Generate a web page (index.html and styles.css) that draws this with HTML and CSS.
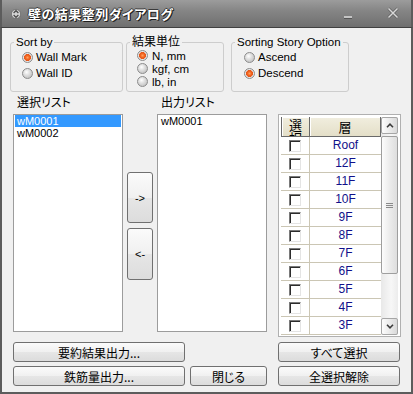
FILE: index.html
```html
<!DOCTYPE html>
<html lang="ja">
<head>
  <meta charset="UTF-8" />
  <title>壁の結果整列ダイアログ</title>
  <link rel="stylesheet" href="styles.css">
</head>
<body>
  <div class="window">
    <div class="titlebar">
      <svg class="title-icon" width="10" height="12" viewBox="0 0 10 12">
        <circle cx="5" cy="6" r="4.6" fill="#d4d4d4" stroke="#5a5a5a" stroke-width="0.6"/>
        <path d="M2.6 5 L5 2.7 L7.4 5 M2.6 7 L5 9.3 L7.4 7" fill="none" stroke="#4a4a4a" stroke-width="1.2"/>
      </svg>
      <span class="title">壁の結果整列ダイアログ</span>
      <span class="minimize"></span>
      <svg class="close" width="12" height="12" viewBox="0 0 12 12">
        <path d="M1.5 1.5 L10.5 10.5 M10.5 1.5 L1.5 10.5" stroke="#5a5a5a" stroke-width="2.8"/>
        <path d="M1.5 1.5 L10.5 10.5 M10.5 1.5 L1.5 10.5" stroke="#d8d8d8" stroke-width="1.5"/>
      </svg>
    </div>

    <div class="body">
      <div class="options">
        <fieldset class="group sort">
          <legend>Sort by</legend>
          <label class="radio"><span class="dot on"></span>Wall Mark</label>
          <label class="radio"><span class="dot"></span>Wall ID</label>
        </fieldset>
        <fieldset class="group unit">
          <legend class="jp">結果単位</legend>
          <label class="radio"><span class="dot on"></span>N, mm</label>
          <label class="radio"><span class="dot"></span>kgf, cm</label>
          <label class="radio"><span class="dot"></span>lb, in</label>
        </fieldset>
        <fieldset class="group story">
          <legend>Sorting Story Option</legend>
          <label class="radio"><span class="dot"></span>Ascend</label>
          <label class="radio"><span class="dot on"></span>Descend</label>
        </fieldset>
      </div>

      <div class="lists">
        <div class="list-col">
          <div class="caption">選択リスト</div>
          <div class="listbox">
            <div class="item selected">wM0001</div>
            <div class="item">wM0002</div>
          </div>
        </div>

        <div class="move-col">
          <button type="button" class="btn move">-&gt;</button>
          <button type="button" class="btn move back">&lt;-</button>
        </div>

        <div class="list-col out">
          <div class="caption">出力リスト</div>
          <div class="listbox">
            <div class="item">wM0001</div>
          </div>
        </div>

        <div class="story-col">
          <div class="story-grid">
            <div class="grid-table">
              <div class="grid-head">
                <div class="hc sel">選択</div>
                <div class="hc">層</div>
              </div>
              <div class="grid-row"><div class="cell sel"><span class="check"></span></div><div class="cell">Roof</div></div>
              <div class="grid-row"><div class="cell sel"><span class="check"></span></div><div class="cell">12F</div></div>
              <div class="grid-row"><div class="cell sel"><span class="check"></span></div><div class="cell">11F</div></div>
              <div class="grid-row"><div class="cell sel"><span class="check"></span></div><div class="cell">10F</div></div>
              <div class="grid-row"><div class="cell sel"><span class="check"></span></div><div class="cell">9F</div></div>
              <div class="grid-row"><div class="cell sel"><span class="check"></span></div><div class="cell">8F</div></div>
              <div class="grid-row"><div class="cell sel"><span class="check"></span></div><div class="cell">7F</div></div>
              <div class="grid-row"><div class="cell sel"><span class="check"></span></div><div class="cell">6F</div></div>
              <div class="grid-row"><div class="cell sel"><span class="check"></span></div><div class="cell">5F</div></div>
              <div class="grid-row"><div class="cell sel"><span class="check"></span></div><div class="cell">4F</div></div>
              <div class="grid-row"><div class="cell sel"><span class="check"></span></div><div class="cell">3F</div></div>
            </div>
            <div class="vscroll">
              <div class="sb-btn">
                <svg width="8" height="5" viewBox="0 0 8 5"><path d="M1 4.2 L4 1.2 L7 4.2" fill="none" stroke="#3c3c3c" stroke-width="1.6"/></svg>
              </div>
              <div class="sb-track">
                <div class="sb-thumb">
                  <svg width="7" height="5" viewBox="0 0 7 5"><path d="M0 0.5 H7 M0 2.5 H7 M0 4.5 H7" stroke="#8a8a8a" stroke-width="1"/></svg>
                </div>
              </div>
              <div class="sb-btn">
                <svg width="8" height="5" viewBox="0 0 8 5"><path d="M1 0.8 L4 3.8 L7 0.8" fill="none" stroke="#3c3c3c" stroke-width="1.6"/></svg>
              </div>
            </div>
          </div>
        </div>
      </div>

      <div class="actions">
        <div class="action-row">
          <button type="button" class="btn wide">要約結果出力...</button>
          <button type="button" class="btn side first">すべて選択</button>
        </div>
        <div class="action-row">
          <button type="button" class="btn wide">鉄筋量出力...</button>
          <button type="button" class="btn close-btn">閉じる</button>
          <button type="button" class="btn side">全選択解除</button>
        </div>
      </div>
    </div>
  </div>
</body>
</html>
```

FILE: styles.css
```css
* {
  box-sizing: border-box;
}

body {
  margin: 0;
  font-family: "Liberation Sans", "Noto Sans CJK JP", sans-serif;
  font-size: 12px;
  color: #000;
  background: #fff;
}

.window {
  width: 413px;
  height: 394px;
  display: flex;
  flex-direction: column;
}

.titlebar {
  height: 28px;
  display: flex;
  align-items: center;
  padding: 0 12px 0 9px;
  background: linear-gradient(#9c9c9c, #858585 40%, #6f6f6f);
  border-bottom: 1px solid #404040;
  border-left: 2px solid #5c5c5c;
  border-right: 2px solid #5c5c5c;
}

.title-icon {
  margin-right: 7px;
}

.title {
  font-family: "Noto Sans CJK JP", sans-serif;
  font-feature-settings: "palt";
  font-size: 13px;
  font-weight: bold;
  color: #fff;
  text-shadow: 1px 1px 0 #1e1e1e, -1px 0 0 #3a3a3a, 0 -1px 0 #3a3a3a, 1px 0 0 #2a2a2a;
  letter-spacing: 0.5px;
}

.minimize {
  margin-left: auto;
  align-self: flex-end;
  margin-bottom: 8px;
  width: 8px;
  height: 3px;
  background: #c4c4c4;
  border-bottom: 1px solid #555;
}

.close {
  margin-left: 35px;
  margin-top: -2px;
}

.body {
  flex: 1;
  background: #f0f0f0;
  border: 2px solid #5c5c5c;
  border-top: 0;
  padding-left: 8px;
}

/* group boxes */
.options {
  display: flex;
  margin-top: 7px;
}

.group {
  margin: 0;
  height: 57px;
  padding: 0;
  border: 1px solid #cdcdcd;
  border-radius: 3px;
}

.group legend {
  margin-left: 3px;
  padding: 0 2px;
  line-height: 14px;
  font-size: 11.5px;
  white-space: nowrap;
}

.group legend.jp {
  font-size: 12px;
}

.sort {
  width: 113px;
}

.unit {
  width: 98px;
  margin-left: 3px;
}

.story {
  width: 118px;
  margin-left: 7px;
}

.radio {
  display: flex;
  align-items: center;
  height: 16px;
  padding-left: 11px;
  font-size: 11.5px;
}

.unit .radio {
  height: 13px;
  padding-left: 10px;
}

.story .radio {
  padding-left: 12px;
}

.unit .radio .dot {
  margin-right: 4px;
}

.dot {
  width: 11px;
  height: 11px;
  margin-right: 3px;
  border-radius: 50%;
  border: 1px solid #8c8c8c;
  background: radial-gradient(circle at 40% 35%, #ffffff 0, #e2e2e2 35%, #b4b4b4 100%);
}

.dot.on {
  background: radial-gradient(circle at 50% 50%, #ffa060 0, #f2641e 2px, #e4561a 3.2px, #ececec 3.8px, #c4c4c4 100%);
}

/* lists */
.lists {
  display: flex;
  margin-top: 3px;
}

.caption {
  height: 19px;
  line-height: 14px;
  padding-left: 4px;
  font-family: "Noto Sans CJK JP", sans-serif;
  font-feature-settings: "palt";
}

.list-col {
  width: 110px;
  margin-left: 3px;
}

.list-col.out {
  margin-left: 4px;
}

.listbox {
  height: 218px;
  background: #fff;
  border: 1px solid #9c9c9c;
}

.item {
  height: 12px;
  line-height: 12px;
  margin: 0 1px;
  padding-left: 2px;
  font-size: 11px;
}

.item.selected {
  background: #3399ff;
  color: #fff;
}

.move-col {
  width: 26px;
  margin-left: 4px;
  padding-top: 77px;
  display: flex;
  flex-direction: column;
}

.btn {
  font-family: "Noto Sans CJK JP", sans-serif;
  font-feature-settings: "palt";
  font-size: 12px;
  color: #000;
  padding: 0;
  border: 1px solid #707070;
  border-radius: 3px;
  background: linear-gradient(#fbfbfb, #f0f0f0 50%, #e6e6e6 51%, #dcdcdc);
}

.btn.move {
  height: 51px;
  font-family: "Liberation Sans", sans-serif;
  font-size: 11px;
}

.btn.move.back {
  height: 52px;
  margin-top: 5px;
}

/* story grid */
.story-col {
  width: 123px;
  margin-left: 11px;
  padding-top: 19px;
}

.story-grid {
  height: 223px;
  display: flex;
  padding: 2px;
  background: #fff;
  border: 1px solid #b0b0b0;
}

.grid-table {
  width: 100px;
}

.grid-head {
  display: flex;
  height: 20px;
}

.hc {
  width: 71px;
  height: 20px;
  overflow: hidden;
  text-align: center;
  font-family: "Noto Sans CJK JP", sans-serif;
  font-size: 13px;
  line-height: 19px;
  background: linear-gradient(#f1eedf, #e4dfc8);
  border-right: 1px solid #6a6a6a;
  border-bottom: 1px solid #6a6a6a;
  box-shadow: inset 1px 1px 0 #fff;
}

.hc.sel {
  width: 29px;
  padding: 1px 3px 0;
  line-height: 13px;
  border-left: 1px solid #6a6a6a;
}

.grid-row {
  display: flex;
  height: 18px;
  border-bottom: 1px solid #cbc6b4;
}

.cell {
  width: 71px;
  text-align: center;
  line-height: 17px;
  color: #10108a;
}

.cell.sel {
  width: 29px;
  display: flex;
  align-items: center;
  justify-content: center;
  border-right: 1px solid #cbc6b4;
}

.check {
  width: 12px;
  height: 12px;
  background: #fff;
  border-top: 1px solid #7a7a7a;
  border-left: 1px solid #7a7a7a;
  border-right: 1px solid #e4e4e4;
  border-bottom: 1px solid #e4e4e4;
  box-shadow: inset 1px 1px 0 #2c2c2c;
}

.vscroll {
  width: 17px;
  height: 218px;
  display: flex;
  flex-direction: column;
  background: linear-gradient(90deg, #e8e8e8, #f7f7f7 60%, #ececec);
}

.sb-btn {
  height: 17px;
  display: flex;
  align-items: center;
  justify-content: center;
  border: 1px solid #a6a6a6;
  border-radius: 2px;
  background: linear-gradient(90deg, #fdfdfd, #ebebeb 50%, #d9d9d9);
}

.sb-track {
  flex: 1;
  padding-top: 2px;
}

.sb-thumb {
  height: 138px;
  display: flex;
  align-items: center;
  justify-content: center;
  border: 1px solid #9e9e9e;
  border-radius: 2px;
  background: linear-gradient(90deg, #fcfcfc, #ececec 50%, #dedede);
}

/* bottom buttons */
.actions {
  margin-top: 5px;
  margin-left: 3px;
}

.action-row {
  display: flex;
  height: 20px;
}

.action-row + .action-row {
  margin-top: 4px;
}

.btn.wide {
  width: 172px;
}

.btn.close-btn {
  width: 77px;
  margin-left: 5px;
}

.btn.side {
  width: 122px;
  margin-left: 11px;
}

.btn.side.first {
  margin-left: 93px;
}
```
